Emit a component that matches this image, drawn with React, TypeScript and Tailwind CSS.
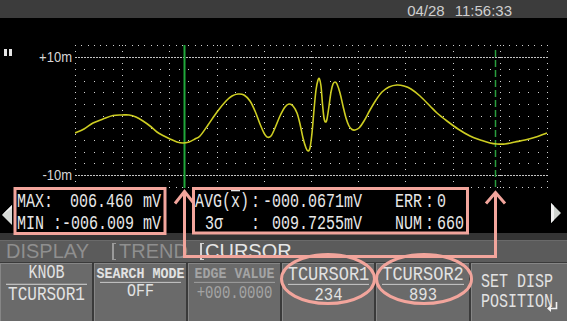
import React from "react";

const PINK = "#f2a59c";

const TRACE: [number, number][] = [
  [75, 133], [84, 129], [93, 123], [103, 119], [113, 115.5], [122, 115], [129, 115], [136, 117],
  [143, 121], [150, 126], [157, 132], [164, 136], [170, 139], [177, 142], [183, 143], [189, 142],
  [195, 139], [200, 136], [208, 125], [217, 112], [226, 101], [232, 96], [238, 94], [244, 95],
  [250, 101], [255, 111], [260, 124], [264, 133], [267, 137], [271, 136], [275, 128], [280, 116],
  [285, 107], [289, 104], [293, 106], [297, 113], [300, 124], [303, 138], [306, 148], [308, 151],
  [310, 148], [312, 133], [314, 110], [316, 90], [318, 80], [319.5, 79], [321, 86], [322.5, 104],
  [324, 118], [325.5, 122], [327, 119], [329, 106], [331, 92], [333, 84], [335, 82], [337, 84],
  [340, 93], [343, 106], [346, 118], [349, 126], [352, 129.5], [355, 130], [359, 128], [364, 121],
  [370, 110], [376, 100], [382, 92], [389, 87], [397, 85], [404, 86], [411, 89], [420, 96],
  [430, 106], [437, 113], [447, 121], [458, 129], [470, 136], [482, 140.5], [490, 143], [497, 144],
  [505, 144], [515, 142], [525, 140], [536, 137], [547, 133],
];

function smoothPath(p: [number, number][]): string {
  let d = `M${p[0][0]},${p[0][1]}`;
  for (let i = 0; i < p.length - 1; i++) {
    const p0 = p[i - 1] || p[i];
    const p1 = p[i];
    const p2 = p[i + 1];
    const p3 = p[i + 2] || p2;
    const t = 1 / 6;
    const c1x = p1[0] + (p2[0] - p0[0]) * t;
    const c1y = p1[1] + (p2[1] - p0[1]) * t;
    const c2x = p2[0] - (p3[0] - p1[0]) * t;
    const c2y = p2[1] - (p3[1] - p1[1]) * t;
    d += ` C${c1x.toFixed(2)},${c1y.toFixed(2)} ${c2x.toFixed(2)},${c2y.toFixed(2)} ${p2[0]},${p2[1]}`;
  }
  return d;
}

function Plot() {
  const x0 = 75;
  const x1 = 547;
  const y0 = 45;
  const y1 = 187;
  const dx = (x1 - x0) / 50;
  const dy = (y1 - y0) / 12;
  const dots: React.ReactNode[] = [];
  for (let r = 0; r <= 12; r++) {
    if (r === 1 || r === 11) continue;
    const y = Math.round(y0 + r * dy);
    const pitch = r === 0 || r === 12 ? (dx * 2) / 3 : dx;
    const n = Math.floor((x1 - x0) / pitch + 0.01);
    for (let j = 0; j <= n; j++) {
      const x = Math.round(x0 + j * pitch);
      dots.push(<rect key={`m${r}-${j}`} x={x} y={y} width={1} height={1} />);
    }
  }
  for (let i = 0; i <= 10; i++) {
    const x = Math.round(x0 + i * ((x1 - x0) / 10));
    for (let k = 0; k <= 24; k++) {
      const y = Math.round(y0 + (k * dy) / 2);
      dots.push(<rect key={`v${i}-${k}`} x={x} y={y} width={1} height={1} />);
    }
  }
  return (
    <svg width="480" height="170" viewBox="75 18 480 170" className="block">
      <g fill="#d2d2d2">{dots}</g>
      <line x1="75" x2="548" y1="57.5" y2="57.5" stroke="#c4c4c4" strokeWidth="1" strokeDasharray="2 1" />
      <line x1="75" x2="548" y1="175.5" y2="175.5" stroke="#c4c4c4" strokeWidth="1" strokeDasharray="2 1" />
      <line x1="184.5" x2="184.5" y1="45" y2="188" stroke="#20a83a" strokeWidth="2" />
      <line x1="495.5" x2="495.5" y1="50" y2="188" stroke="#2a9e3e" strokeWidth="1.5" strokeDasharray="7 3" />
      <path d={smoothPath(TRACE)} fill="none" stroke="#cdcd22" strokeWidth="1.6" strokeLinejoin="round" />
    </svg>
  );
}

type BtnProps = {
  w: string;
  label: string;
  value: string;
  labelCls: string;
  valueCls: string;
  lineCls: string;
  pad: string;
};

function Btn({ w, label, value, labelCls, valueCls, lineCls, pad }: BtnProps) {
  return (
    <div className={`${w} h-full bg-[#6a6a6a] border-t border-l border-[#868686] flex flex-col ${pad}`}>
      <div className={`mx-[5px] flex justify-center border-b ${lineCls} ${labelCls}`}>
        <span className="whitespace-pre">{label}</span>
      </div>
      <div className={`flex justify-center ${valueCls}`}>
        <span className="whitespace-pre">{value}</span>
      </div>
    </div>
  );
}

export default function App() {
  return (
    <div className="relative w-[567px] h-[321px] bg-black overflow-hidden">
      {/* header */}
      <div className="h-[18px] bg-[#3c3c3c] flex justify-end items-start pt-[4px] pr-[55px] text-[15px] leading-[14px] text-[#cfcfcf] font-['Liberation_Sans',sans-serif]">
        <span>04/28</span>
        <span className="ml-[10px]">11:56:33</span>
      </div>

      {/* plot area */}
      <div className="flex h-[170px]">
        <div className="w-[75px] flex flex-col pr-[3px] font-['Liberation_Sans',sans-serif] text-[13px] leading-[13px] text-[#d6d6d6]">
          <div className="flex justify-between items-start mt-[31px]">
            <div className="flex gap-[2px] ml-[4px]">
              <div className="w-[3px] h-[7px] bg-[#e6e6e6]" />
              <div className="w-[3px] h-[7px] bg-[#e6e6e6]" />
            </div>
            <span className="mt-[1px] scale-y-[1.15]">+10m</span>
          </div>
          <div className="flex justify-end mt-[105px]">
            <span className="scale-y-[1.15]">-10m</span>
          </div>
        </div>
        <Plot />
      </div>

      {/* measurement row */}
      <div className="flex h-[45px] font-['Liberation_Mono',monospace] text-[15px] leading-[22px] text-[#e8e8e8]">
        <div className="w-[17px]">
          <svg className="mt-[17px] ml-[2px]" width="11" height="20" viewBox="0 0 11 20">
            <polygon points="0,10 10,0 10,20" fill="#d7dad7" />
            <polygon points="0,10 10,0 10,3" fill="#f4f4f4" />
          </svg>
        </div>
        <div className="w-[150px] pt-[4px]">
          <div className="flex scale-y-[1.3] whitespace-pre">
            <div className="flex w-[116px]">
              <span>MAX:</span>
              <span className="flex-1 text-right">006.460</span>
            </div>
            <span className="ml-[10px]">mV</span>
          </div>
          <div className="flex scale-y-[1.3] whitespace-pre">
            <div className="flex w-[116px]">
              <span>MIN :</span>
              <span className="flex-1 text-right">-006.009</span>
            </div>
            <span className="ml-[10px]">mV</span>
          </div>
        </div>
        <div className="w-[28px]" />
        <div className="w-[290px] pt-[4px]">
          <div className="flex scale-y-[1.3] whitespace-pre">
            <div className="flex w-[167px]">
              <span className="w-[56px]">
                AVG(<span className="overline">x</span>)
              </span>
              <span>:</span>
              <span className="flex-1 text-right">-000.0671mV</span>
            </div>
            <span className="ml-[33px]">ERR</span>
            <span className="ml-[3px]">:</span>
            <span className="ml-[3px]">0</span>
          </div>
          <div className="flex scale-y-[1.3] whitespace-pre">
            <div className="flex w-[167px]">
              <span className="w-[56px] pl-[10px]">3σ</span>
              <span>:</span>
              <span className="flex-1 text-right">009.7255mV</span>
            </div>
            <span className="ml-[33px]">NUM</span>
            <span className="ml-[3px]">:</span>
            <span className="ml-[3px]">660</span>
          </div>
        </div>
        <div className="flex-1 flex justify-end pr-[6px]">
          <svg className="mt-[15px]" width="11" height="20" viewBox="0 0 11 20">
            <polygon points="11,10 1,0 1,20" fill="#cfd3cf" />
            <polygon points="1,0 1,20 4,17 4,3" fill="#f0f0f0" />
          </svg>
        </div>
      </div>

      {/* separator band */}
      <div className="h-[7px] bg-[#343434]" />

      {/* tab bar */}
      <div className="h-[22px] bg-[#5b5b5b] border-t border-[#6a6a6a] flex items-start font-['Liberation_Sans',sans-serif] text-[20px] leading-[21px]">
        <span className="ml-[6px] w-[106px] text-[#8f8f8f] scale-y-[1.05]">DISPLAY</span>
        <span className="mt-[2px] w-[4px] h-[17px] border-l-2 border-y border-[#9a9a9a]" />
        <span className="ml-[3px] w-[81px] text-[#8f8f8f] scale-y-[1.05]">TREND</span>
        <span className="mt-[2px] w-[4px] h-[17px] border-l-2 border-y border-[#d2d2d2]" />
        <span className="ml-[1px] text-[#e6e6e6] scale-y-[1.05]">CURSOR</span>
      </div>

      {/* soft buttons */}
      <div className="h-[59px] bg-[#3a3a3a] pt-[1px] flex gap-[2px] font-['Liberation_Mono',monospace] text-[#e2e2e2]">
        <Btn
          w="w-[92px]"
          pad="pt-[4px]"
          label="KNOB"
          value="TCURSOR1"
          labelCls="h-[17px] text-[15px] leading-[17px] scale-y-[1.3] origin-bottom"
          lineCls="border-[#bdbdbd]"
          valueCls="text-[16px] leading-[18px] mt-[1px] scale-y-[1.3]"
        />
        <Btn
          w="w-[92px]"
          pad="pt-[4px]"
          label="SEARCH MODE"
          value="OFF"
          labelCls="h-[15px] text-[13.3px] leading-[15px] font-bold scale-y-[1.15] origin-bottom"
          lineCls="border-[#bdbdbd]"
          valueCls="text-[15px] leading-[18px] scale-y-[1.2]"
        />
        <Btn
          w="w-[92px]"
          pad="pt-[4px] text-[#a4a4a4]"
          label="EDGE VALUE"
          value="+000.0000"
          labelCls="h-[15px] text-[13.3px] leading-[15px] font-bold scale-y-[1.15] origin-bottom"
          lineCls="border-[#989898]"
          valueCls="text-[14px] leading-[18px] mt-[1px] scale-y-[1.25]"
        />
        <Btn
          w="w-[92px]"
          pad="pt-[4px]"
          label="TCURSOR1"
          value="234"
          labelCls="h-[17px] text-[17px] leading-[17px] scale-y-[1.15] origin-bottom"
          lineCls="border-[#bdbdbd]"
          valueCls="text-[15.5px] leading-[18px] mt-[1px] scale-y-[1.2]"
        />
        <Btn
          w="w-[93px]"
          pad="pt-[4px]"
          label="TCURSOR2"
          value="893"
          labelCls="h-[17px] text-[17px] leading-[17px] scale-y-[1.15] origin-bottom"
          lineCls="border-[#bdbdbd]"
          valueCls="text-[15.5px] leading-[18px] mt-[1px] scale-y-[1.2]"
        />
        <div className="relative w-[96px] h-full bg-[#6a6a6a] border-t border-l border-[#868686] pt-[9px] pl-[9px] text-[15px] leading-[20px]">
          <div className="scale-y-[1.3] origin-left whitespace-pre">SET DISP</div>
          <div className="scale-y-[1.3] origin-left whitespace-pre">POSITION</div>
          <svg className="absolute right-[9px] bottom-[9px]" width="11" height="10" viewBox="0 0 11 10">
            <path d="M9.5 0 V6.5 H3" fill="none" stroke="#f2f2f2" strokeWidth="1.6" />
            <polygon points="0,6.5 4,3 4,10" fill="#f2f2f2" />
          </svg>
        </div>
      </div>

      {/* annotation overlay */}
      <svg className="absolute left-0 top-0 pointer-events-none" width="567" height="321" viewBox="0 0 567 321">
        <g fill="none" stroke={PINK} strokeWidth="3" strokeLinejoin="miter">
          <rect x="15" y="188.5" width="150" height="45" />
          <rect x="193.5" y="188.5" width="274" height="44.5" />
          <path d="M184.5 192 V256.5 H495.5 V193" />
          <path d="M175 203.5 L184.5 191.5 L194 203.5" />
          <path d="M486 203.5 L495.5 192.5 L505 203.5" />
          <ellipse cx="328" cy="279" rx="46.5" ry="24.5" />
          <ellipse cx="424" cy="279" rx="47.5" ry="24.5" />
        </g>
      </svg>
    </div>
  );
}
